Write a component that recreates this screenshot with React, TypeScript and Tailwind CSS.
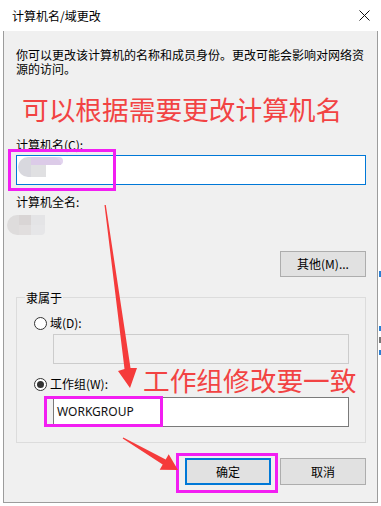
import React from "react";

const cjk = { fontFamily: '"Noto Sans CJK SC", "Noto Sans", sans-serif' };
const latin = { fontFamily: '"Noto Sans", "Noto Sans CJK SC", sans-serif' };

function Radio({ checked }: { checked?: boolean }) {
  return (
    <div className="w-[13px] h-[13px] rounded-full border border-[#333333] bg-white flex items-center justify-center shrink-0">
      {checked && <div className="w-[7px] h-[7px] rounded-full bg-[#333333]" />}
    </div>
  );
}

export default function App() {
  return (
    <div className="relative w-[381px] h-[506px] bg-white overflow-hidden text-[12px] text-black" style={cjk}>
      {/* title bar */}
      <div className="h-[31px] flex items-center justify-between pl-[12px] pr-[10px] bg-white">
        <span className="leading-[14px]">计算机名/域更改</span>
        <svg width="11" height="11" viewBox="0 0 11 11" className="mr-[1px]">
          <path d="M0.5 0.5 L10.5 10.5 M10.5 0.5 L0.5 10.5" stroke="#111" strokeWidth="1" />
        </svg>
      </div>

      {/* body */}
      <div className="ml-[3px] w-[375px] h-[472px] border-x border-b border-[#9c9c9c] bg-[#f0f0f0] pl-[12px] pr-[11px] flex flex-col">
        <p className="mt-[17px] leading-[14px] w-[350px] whitespace-nowrap">
          你可以更改该计算机的名称和成员身份。更改可能会影响对网络资
          <br />
          源的访问。
        </p>
        <div className="mt-[19px] ml-[6px] text-[26.7px] leading-[27px] text-[#f24343] whitespace-nowrap">
          可以根据需要更改计算机名
        </div>
        <div className="mt-[16px] leading-[14px]">计算机名(C):</div>
        <div className="relative mt-[3px] h-[30px] w-[350px] border border-[#0078d7] bg-white">
          <div className="absolute left-[1px] top-[1px] flex">
            <div className="w-[13px] h-[20px] rounded-l-full bg-[#d8d8de]" />
            <div className="w-[15px] h-[20px] bg-[#e0e0e2]" />
            <div className="flex flex-col">
              <div className="w-[17px] h-[8px] rounded-r-full bg-[#e2d3ef]" />
            </div>
          </div>
          <div className="absolute left-[14px] top-[1px] w-[30px] h-[8px] bg-[#dccbe8] rounded-tr-full" />
        </div>
        <div className="mt-[10px] leading-[14px]">计算机全名:</div>
        <div className="mt-[6px] h-[20px] -ml-[9px] flex">
          <div className="w-[12px] h-[20px] rounded-l-full bg-[#dedcdc]" />
          <div className="flex flex-col">
            <div className="w-[12px] h-[10px] bg-[#d9d5d5]" />
            <div className="w-[12px] h-[10px] bg-[#e1dede]" />
          </div>
          <div className="flex flex-col">
            <div className="w-[14px] h-[10px] bg-[#e4e4e6]" />
            <div className="w-[14px] h-[10px] bg-[#e6e6e8] rounded-br-[4px]" />
          </div>
        </div>
        <div className="mt-[16px] flex justify-end">
          <div className="w-[86px] h-[26px] border border-[#adadad] bg-[#e1e1e1] flex items-center justify-center leading-[14px]">
            其他(M)...
          </div>
        </div>

        {/* group box */}
        <div className="relative mt-[20px] h-[146px] w-[350px] border border-[#dcdcdc] pl-[17px]">
          <div className="absolute left-[8px] top-[-7px] px-[1px] bg-[#f0f0f0] leading-[14px]">隶属于</div>
          <div className="mt-[18px] h-[14px] flex items-center gap-[3px]">
            <Radio />
            <span className="leading-[14px]">域(D):</span>
          </div>
          <div className="mt-[4px] ml-[19px] w-[296px] h-[30px] border border-[#cccccc] bg-[#f0f0f0]" />
          <div className="mt-[13px] h-[14px] flex items-center gap-[3px]">
            <Radio checked />
            <span className="leading-[14px]">工作组(W):</span>
          </div>
          <div className="mt-[6px] ml-[19px] w-[296px] h-[30px] border border-[#7a7a7a] bg-white flex items-center pl-[3px]">
            <span className="text-[12px] leading-[14px] text-[#111]" style={latin}>WORKGROUP</span>
          </div>
        </div>

        {/* buttons */}
        <div className="mt-[15px] flex justify-end gap-[9px]">
          <div className="w-[86px] h-[27px] border-2 border-[#0078d7] bg-[#e1e1e1] flex items-center justify-center leading-[14px]">
            确定
          </div>
          <div className="w-[86px] h-[27px] border border-[#adadad] bg-[#e1e1e1] flex items-center justify-center leading-[14px]">
            取消
          </div>
        </div>
      </div>

      {/* outside marks at right edge */}
      <div className="absolute left-[379px] top-[271px] w-[2px] h-[6px] bg-[#2a7fd4]" />
      <div className="absolute left-[379px] top-[326px] w-[2px] h-[5px] bg-[#2a7fd4]" />
      <div className="absolute left-[379px] top-[337px] w-[2px] h-[6px] bg-[#777]" />
      <div className="absolute left-[379px] top-[350px] w-[2px] h-[5px] bg-[#2a7fd4]" />

      {/* annotations */}
      <div className="absolute left-[143px] top-[366px] text-[26.7px] leading-[27px] text-[#f24343] whitespace-nowrap">
        工作组修改要一致
      </div>
      <div className="absolute left-[8px] top-[149px] w-[108px] h-[42px] border-[3px] border-[#f21ef2]" />
      <div className="absolute left-[44px] top-[396px] w-[119px] h-[31px] border-[3px] border-[#f21ef2]" />
      <div className="absolute left-[176px] top-[453px] w-[102px] h-[40px] border-[3px] border-[#f21ef2]" />

      <svg className="absolute left-0 top-0 pointer-events-none" width="381" height="506" viewBox="0 0 381 506">
        <polygon
          points="104.5,205 124.5,369 118,371 130,388 137,368 130.5,368 105.8,205"
          fill="#f53b3b"
        />
        <polygon
          points="122.7,438.5 162.7,464.6 159.7,469.8 178,470 168.7,454.2 165.7,459.4 123.3,437.5"
          fill="#f53b3b"
        />
      </svg>
    </div>
  );
}
